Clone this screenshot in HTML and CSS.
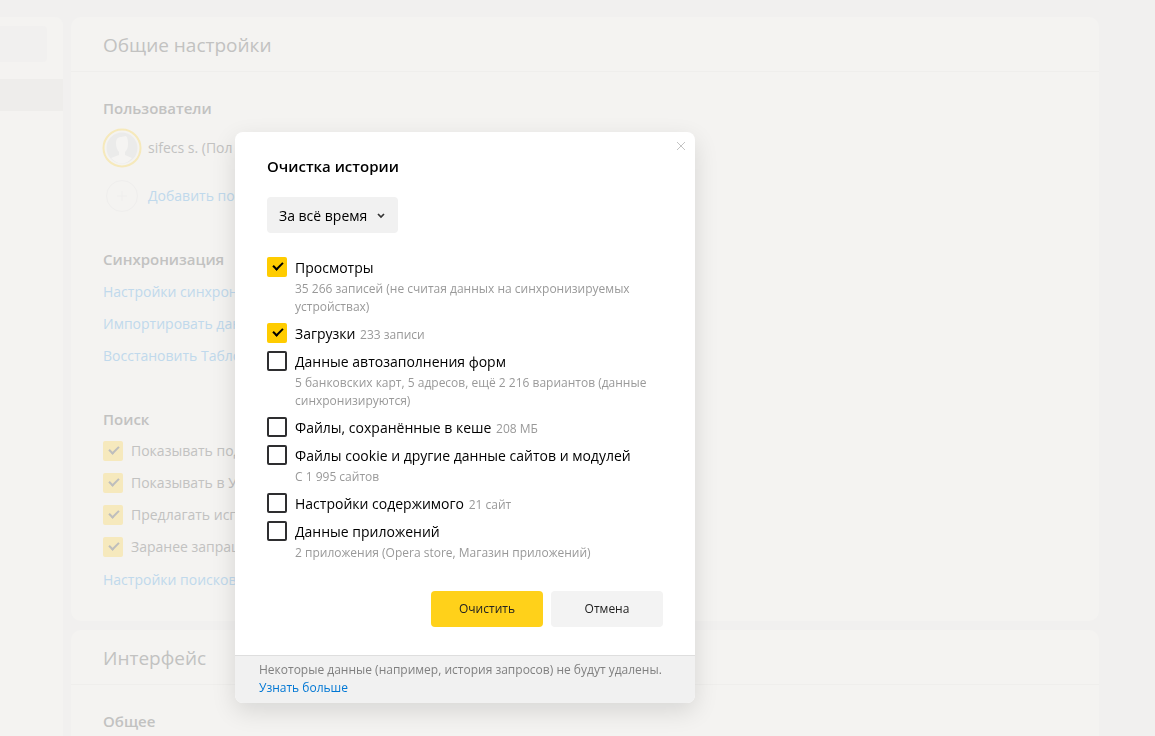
FILE: index.html
```html
<!DOCTYPE html>
<html lang="ru">
<head>
    <meta charset="UTF-8">
    <meta name="viewport" content="width=device-width, initial-scale=1.0">
    <title>Настройки</title>
    <link rel="stylesheet" href="styles.css">
</head>
<body>

<div class="page">
    <aside class="sidebar">
        <div class="sidebar-search"></div>
        <div class="sidebar-active"></div>
    </aside>
    <main class="content">
        <section class="card">
            <h1 class="card-title">Общие настройки</h1>
            <div class="card-body">
                <div class="group users">
                    <h2>Пользователи</h2>
                    <div class="user">
                        <svg class="avatar" viewBox="0 0 40 40">
                            <circle cx="20" cy="20" r="18.5" fill="none" stroke="#f6e9bb" stroke-width="2"/>
                            <circle cx="20" cy="20" r="15.5" fill="#ebebea"/>
                            <path d="M14 15c0-4 2-6 5-6l5-1c2 2 2 5 2 8 0 4-1 6-3 8v3l7 3c-3 3-6 5.500-10 5.500S12 33.500 9 30l8-3v-3c-2-2-3-5-3-9z" fill="#f5f4f2"/>
                        </svg>
                        <span>sifecs s. (Пол</span>
                    </div>
                    <div class="user">
                        <svg class="avatar" viewBox="0 0 40 40">
                            <circle cx="20" cy="20" r="15.500" fill="none" stroke="#efeeed"/>
                            <path d="M20 15v10M15 20h10" stroke="#efeeed"/>
                        </svg>
                        <a href="#">Добавить по</a>
                    </div>
                </div>
                <div class="group">
                    <h2>Синхронизация</h2>
                    <a class="row" href="#">Настройки синхрон</a>
                    <a class="row" href="#">Импортировать дан</a>
                    <a class="row" href="#">Восстановить Табло</a>
                </div>
                <div class="group">
                    <h2>Поиск</h2>
                    <label class="row"><input type="checkbox" class="check" checked>Показывать под</label>
                    <label class="row"><input type="checkbox" class="check" checked>Показывать в У</label>
                    <label class="row"><input type="checkbox" class="check" checked>Предлагать исп</label>
                    <label class="row"><input type="checkbox" class="check" checked>Заранее запраш</label>
                    <a class="row" href="#">Настройки поисков</a>
                </div>
            </div>
        </section>
        <section class="card">
            <h1 class="card-title">Интерфейс</h1>
            <div class="card-body">
                <div class="group">
                    <h2>Общее</h2>
                </div>
            </div>
        </section>
    </main>
</div>

<dialog class="dialog" open aria-labelledby="dialog-title">
    <button class="close" type="button" aria-label="Закрыть">
        <svg width="10" height="10" viewBox="0 0 10 10"><path d="M1 1l8 8M9 1l-8 8" stroke="#c4c4c4"/></svg>
    </button>
    <form class="dialog-body">
        <h2 class="dialog-title" id="dialog-title">Очистка истории</h2>
        <div class="period">
            <select aria-label="Период">
                <option>За всё время</option>
            </select>
            <svg class="arrow" width="8" height="6" viewBox="0 0 8 6"><path d="M1 1l3 3 3-3" fill="none" stroke="#333" stroke-width="1.700"/></svg>
        </div>
        <div class="options">
            <div class="option">
                <input type="checkbox" class="check" id="views" checked>
                <div class="option-text">
                    <label for="views">Просмотры</label>
                    <p class="hint">35 266 записей (не считая данных на синхронизируемых устройствах)</p>
                </div>
            </div>
            <div class="option">
                <input type="checkbox" class="check" id="downloads" checked>
                <div class="option-text"><label for="downloads">Загрузки</label> <span class="hint">233 записи</span></div>
            </div>
            <div class="option">
                <input type="checkbox" class="check" id="forms">
                <div class="option-text">
                    <label for="forms">Данные автозаполнения форм</label>
                    <p class="hint">5 банковских карт, 5 адресов, ещё 2 216 вариантов (данные синхронизируются)</p>
                </div>
            </div>
            <div class="option">
                <input type="checkbox" class="check" id="cache">
                <div class="option-text"><label for="cache">Файлы, сохранённые в кеше</label> <span class="hint">208 МБ</span></div>
            </div>
            <div class="option">
                <input type="checkbox" class="check" id="cookies">
                <div class="option-text">
                    <label for="cookies">Файлы cookie и другие данные сайтов и модулей</label>
                    <p class="hint">С 1 995 сайтов</p>
                </div>
            </div>
            <div class="option">
                <input type="checkbox" class="check" id="site-settings">
                <div class="option-text"><label for="site-settings">Настройки содержимого</label> <span class="hint">21 сайт</span></div>
            </div>
            <div class="option">
                <input type="checkbox" class="check" id="apps">
                <div class="option-text">
                    <label for="apps">Данные приложений</label>
                    <p class="hint">2 приложения (Opera store, Магазин приложений)</p>
                </div>
            </div>
        </div>
        <div class="actions">
            <button class="button primary" type="button">Очистить</button>
            <button class="button" type="button">Отмена</button>
        </div>
    </form>
    <footer class="dialog-footer">
        <p>Некоторые данные (например, история запросов) не будут удалены.</p>
        <a href="#">Узнать больше</a>
    </footer>
</dialog>

</body>
</html>
```
FILE: styles.css
```css
* {
    box-sizing: border-box;
}
body {
    margin: 0;
    height: 100vh;
    overflow: hidden;
    background-color: #f1f0ef;
    font-family: "Open Sans", "Noto Sans", sans-serif;
    font-size: 14px;
    line-height: 20px;
    color: #000;
}
h1, h2, p {
    margin: 0;
}
a {
    color: #0077d4;
    text-decoration: none;
}

/* Страница настроек */
.page {
    display: flex;
    gap: 8px;
    min-height: 100vh;
    padding: 17px 56px 0 0;
    color: #c2c2c1;
}
.page a {
    color: #c0d9ec;
}
.sidebar {
    flex: 0 0 63px;
    padding-top: 9px;
    background-color: #f4f3f1;
    border-top-right-radius: 8px;
}
.sidebar-search {
    height: 36px;
    margin: 0 16px 17px 0;
    background-color: #f1f0ef;
    border-radius: 0 4px 4px 0;
}
.sidebar-active {
    height: 32px;
    background-color: #eeedeb;
}
.content {
    flex: 1;
    display: flex;
    flex-direction: column;
    gap: 9px;
}
.card {
    background-color: #f4f3f1;
    border-radius: 10px;
}
.card-title {
    padding: 16px 32px 14px;
    border-bottom: 1px solid #efeeec;
    font-size: 19px;
    line-height: 24px;
    font-weight: 400;
}
.card-body {
    display: flex;
    flex-direction: column;
    gap: 32px;
    padding: 20px 32px 26px;
}
.group {
    display: flex;
    flex-direction: column;
}
.group h2 {
    font-size: 15px;
    line-height: 32px;
    font-weight: 600;
}
.users {
    margin-bottom: -9px;
}
.user {
    display: flex;
    align-items: center;
    gap: 6px;
    height: 48px;
}
.avatar {
    width: 40px;
    height: 40px;
    margin-left: -1px;
}
.row {
    display: flex;
    align-items: center;
    gap: 8px;
    height: 32px;
}
a.row {
    padding-top: 2px;
}

/* Флажки */
.check {
    appearance: none;
    flex: none;
    display: flex;
    justify-content: center;
    width: 20px;
    height: 20px;
    margin: 0;
    border: 2px solid #2e2e30;
    border-radius: 2px;
}
.check:checked {
    border: none;
    background-color: #ffcc00;
}
.check:checked::after {
    content: "";
    width: 8px;
    height: 4px;
    margin: 5px 0 0 2px;
    border: solid #000;
    border-width: 0 0 2px 2px;
    transform: rotate(-45deg);
}
.page .check {
    background-color: #f6e9bd;
}
.page .check::after {
    border-color: #bebebd;
}

/* Окно очистки истории */
.dialog {
    position: fixed;
    top: 132px;
    left: 235px;
    width: 460px;
    margin: 0;
    padding: 0;
    border: none;
    border-radius: 8px;
    background-color: #fff;
    box-shadow: 0 8px 24px rgba(0, 0, 0, 0.12);
    overflow: hidden;
}
.close {
    position: absolute;
    top: 4px;
    right: 4px;
    display: flex;
    align-items: center;
    justify-content: center;
    width: 20px;
    height: 20px;
    padding: 0;
    border: none;
    background: none;
    cursor: pointer;
}
.dialog-body {
    padding: 24px 32px 28px;
}
.dialog-title {
    font-size: 15px;
    line-height: 20px;
    font-weight: 600;
}
.period {
    position: relative;
    width: fit-content;
    margin: 21px 0 24px;
}
.period select {
    appearance: none;
    display: block;
    height: 36px;
    padding: 1px 30px 0 12px;
    border: none;
    border-radius: 4px;
    background-color: #f1f1f1;
    font: inherit;
    color: inherit;
}
.arrow {
    position: absolute;
    top: 16px;
    right: 13px;
    pointer-events: none;
}
.options {
    display: flex;
    flex-direction: column;
    gap: 8px;
}
.option {
    display: flex;
    gap: 8px;
}
.option-text {
    margin: 1px 0 -1px;
}
.hint {
    font-size: 12px;
    line-height: 18px;
    color: #999;
}
span.hint {
    margin-left: 1px;
}
p.hint {
    margin-top: 2px;
}
.actions {
    display: flex;
    justify-content: flex-end;
    gap: 8px;
    margin-top: 30px;
}
.button {
    width: 112px;
    height: 36px;
    border: none;
    border-radius: 4px;
    background-color: #f3f3f3;
    font: inherit;
    font-size: 12px;
    color: #222;
    cursor: pointer;
}
.primary {
    background-color: #ffd11a;
}
.dialog-footer {
    padding: 5px 24px 6px;
    border-top: 1px solid #dedede;
    background-color: #f1f1f1;
    font-size: 12px;
    line-height: 18px;
    color: #808080;
}
```
